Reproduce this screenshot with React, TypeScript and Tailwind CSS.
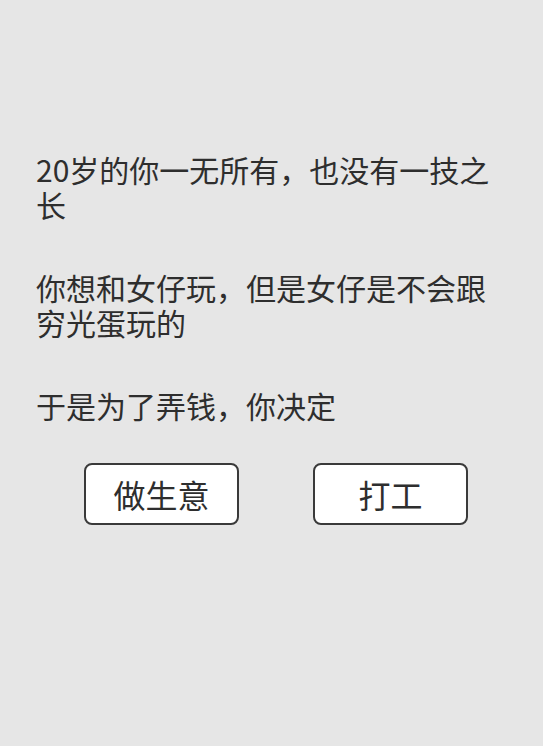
const paragraphs = [
  "20岁的你一无所有，也没有一技之长",
  "你想和女仔玩，但是女仔是不会跟穷光蛋玩的",
  "于是为了弄钱，你决定",
];

const choices = ["做生意", "打工"];

export default function App() {
  return (
    <div
      className="min-h-[746px] w-full bg-[#e6e6e6] text-[#2e2e2e] pt-[152px]"
      style={{ fontFamily: '"Noto Sans CJK SC", "Noto Sans", sans-serif' }}
    >
      <div className="px-[36px] flex flex-col gap-[48px]">
        {paragraphs.map((p) => (
          <p key={p} className="text-[30px] leading-[35px]">
            {p}
          </p>
        ))}
      </div>
      <div className="flex pl-[84px] gap-[74px] mt-[40px]">
        {choices.map((c) => (
          <button
            key={c}
            className="w-[155px] h-[62px] bg-white border-2 border-[#3a3a3a] rounded-[8px] text-[32px] leading-none text-[#2e2e2e] flex items-center justify-center"
          >
            {c}
          </button>
        ))}
      </div>
    </div>
  );
}
